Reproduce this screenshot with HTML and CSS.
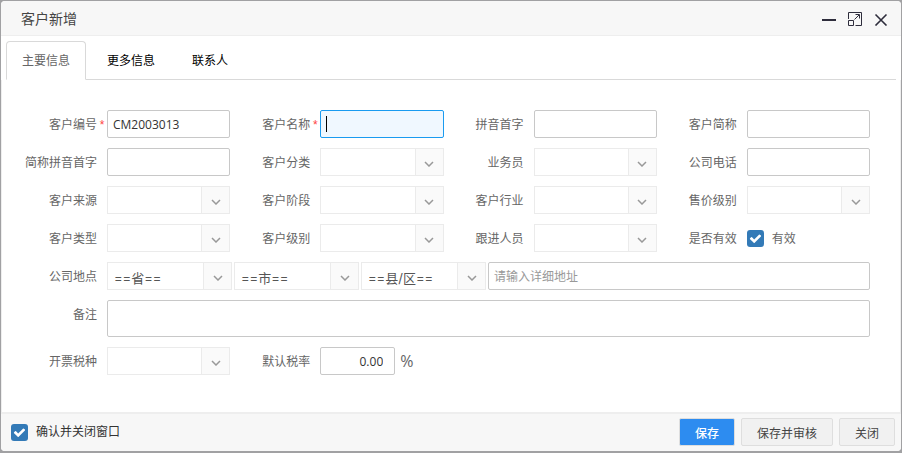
FILE: index.html
```html
<!DOCTYPE html>
<html lang="zh-CN">
	<head>
		<meta charset="UTF-8" />
		<meta name="viewport" content="width=device-width, initial-scale=1.0" />
		<title>客户新增</title>
		<link rel="stylesheet" href="styles.css">
	</head>
	<body>
		<svg class="sprite" aria-hidden="true">
			<symbol id="arrow" viewBox="0 0 10 6">
				<path d="M1 1l4 4 4-4" fill="none" stroke="#999" stroke-width="1.5" />
			</symbol>
			<symbol id="check" viewBox="0 0 1792 1792">
				<path fill="#fff" d="M1671 566q0 40-28 68l-724 724-136 136q-28 28-68 28t-68-28l-136-136-362-362q-28-28-28-68t28-68l136-136q28-28 68-28t68 28l294 295 656-657q28-28 68-28t68 28l136 136q28 28 28 68z" />
			</symbol>
		</svg>

		<div class="dialog">
			<header class="dialog-header">
				<h1 class="dialog-title">客户新增</h1>
				<div class="dialog-tools">
					<button type="button" class="tool" aria-label="最小化">
						<svg width="14" height="14" viewBox="0 0 14 14"><path d="M0 8h14" stroke="#2e2d3c" stroke-width="2" /></svg>
					</button>
					<button type="button" class="tool" aria-label="最大化">
						<svg width="14" height="14" viewBox="0 0 14 14" fill="none" stroke="#2e2d3c">
							<path d="M.5 7V.5h13v13H7.500M.5 8.500h5v5h-5zM6.500 7.500L11 3M7.500 2.500h4v4" />
						</svg>
					</button>
					<button type="button" class="tool" aria-label="关闭窗口">
						<svg width="14" height="14" viewBox="0 0 14 14"><path d="M1.500 2.500l11 11M12.500 2.500l-11 11" stroke="#2e2d3c" stroke-width="1.600" /></svg>
					</button>
				</div>
			</header>

			<nav class="tabs">
				<button type="button" class="tab active">主要信息</button>
				<button type="button" class="tab">更多信息</button>
				<button type="button" class="tab">联系人</button>
			</nav>

			<form class="form" id="customer-form">
				<div class="field">
					<label class="label" for="code">客户编号<span class="star">*</span></label>
					<input class="input" type="text" id="code" value="CM2003013" />
				</div>
				<div class="field">
					<label class="label" for="name">客户名称<span class="star">*</span></label>
					<input class="input current" type="text" id="name" />
				</div>
				<div class="field">
					<label class="label" for="pinyin">拼音首字</label>
					<input class="input" type="text" id="pinyin" />
				</div>
				<div class="field">
					<label class="label" for="short">客户简称</label>
					<input class="input" type="text" id="short" />
				</div>

				<div class="field">
					<label class="label" for="short-pinyin">简称拼音首字</label>
					<input class="input" type="text" id="short-pinyin" />
				</div>
				<div class="field">
					<label class="label" for="category">客户分类</label>
					<div class="select"><select id="category"></select><span class="arrow"><svg><use href="#arrow" /></svg></span></div>
				</div>
				<div class="field">
					<label class="label" for="salesman">业务员</label>
					<div class="select"><select id="salesman"></select><span class="arrow"><svg><use href="#arrow" /></svg></span></div>
				</div>
				<div class="field">
					<label class="label" for="phone">公司电话</label>
					<input class="input" type="text" id="phone" />
				</div>

				<div class="field">
					<label class="label" for="source">客户来源</label>
					<div class="select"><select id="source"></select><span class="arrow"><svg><use href="#arrow" /></svg></span></div>
				</div>
				<div class="field">
					<label class="label" for="stage">客户阶段</label>
					<div class="select"><select id="stage"></select><span class="arrow"><svg><use href="#arrow" /></svg></span></div>
				</div>
				<div class="field">
					<label class="label" for="industry">客户行业</label>
					<div class="select"><select id="industry"></select><span class="arrow"><svg><use href="#arrow" /></svg></span></div>
				</div>
				<div class="field">
					<label class="label" for="price-level">售价级别</label>
					<div class="select"><select id="price-level"></select><span class="arrow"><svg><use href="#arrow" /></svg></span></div>
				</div>

				<div class="field">
					<label class="label" for="type">客户类型</label>
					<div class="select"><select id="type"></select><span class="arrow"><svg><use href="#arrow" /></svg></span></div>
				</div>
				<div class="field">
					<label class="label" for="level">客户级别</label>
					<div class="select"><select id="level"></select><span class="arrow"><svg><use href="#arrow" /></svg></span></div>
				</div>
				<div class="field">
					<label class="label" for="follower">跟进人员</label>
					<div class="select"><select id="follower"></select><span class="arrow"><svg><use href="#arrow" /></svg></span></div>
				</div>
				<div class="field">
					<span class="label">是否有效</span>
					<label class="check">
						<span class="check-box"><input type="checkbox" checked /><svg><use href="#check" /></svg></span>
						<span class="check-text">有效</span>
					</label>
				</div>

				<div class="field wide">
					<label class="label" for="province">公司地点</label>
					<div class="address">
						<div class="select"><select id="province"><option>==省==</option></select><span class="arrow"><svg><use href="#arrow" /></svg></span></div>
						<div class="select"><select aria-label="市"><option>==市==</option></select><span class="arrow"><svg><use href="#arrow" /></svg></span></div>
						<div class="select"><select aria-label="县/区"><option>==县/区==</option></select><span class="arrow"><svg><use href="#arrow" /></svg></span></div>
						<input class="input" type="text" aria-label="详细地址" placeholder="请输入详细地址" />
					</div>
				</div>

				<div class="field wide">
					<label class="label" for="remark">备注</label>
					<textarea class="input remark" id="remark"></textarea>
				</div>

				<div class="field">
					<label class="label" for="tax-type">开票税种</label>
					<div class="select"><select id="tax-type"></select><span class="arrow"><svg><use href="#arrow" /></svg></span></div>
				</div>
				<div class="field">
					<label class="label" for="tax-rate">默认税率</label>
					<div class="rate">
						<input class="input number" type="text" id="tax-rate" value="0.00" />
						<span class="unit">%</span>
					</div>
				</div>
			</form>

			<footer class="dialog-footer">
				<label class="check">
					<span class="check-box"><input type="checkbox" checked /><svg><use href="#check" /></svg></span>
					<span>确认并关闭窗口</span>
				</label>
				<div class="actions">
					<button type="submit" form="customer-form" class="btn primary">保存</button>
					<button type="button" class="btn">保存并审核</button>
					<button type="button" class="btn">关闭</button>
				</div>
			</footer>
		</div>
	</body>
</html>
```
FILE: styles.css
```css
* {
	box-sizing: border-box;
}

body {
	display: flex;
	min-height: 100vh;
	margin: 0;
	padding: 1px 1px 2px;
	background: #a1a1a3;
	color: #666;
	font-family: 'Open Sans', 'Noto Sans CJK SC', sans-serif;
	font-size: 12px;
	line-height: 18px;
}

button,
input,
select,
textarea {
	margin: 0;
	font: inherit;
}

button {
	cursor: pointer;
}

.sprite {
	display: none;
}

/* dialog */
.dialog {
	display: flex;
	flex: 1;
	flex-direction: column;
	min-width: 0;
	border-radius: 4px;
	background: #fff;
	overflow: hidden;
}

.dialog-header {
	display: flex;
	align-items: center;
	justify-content: space-between;
	height: 35px;
	padding: 0 7px 0 20px;
	border-bottom: 1px solid #eee;
	background: #f7f7f7;
}

.dialog-title {
	margin: 0;
	padding-top: 2px;
	color: #444;
	font-size: 14px;
	font-weight: 400;
}

.dialog-tools {
	display: flex;
	padding-top: 1px;
}

.tool {
	display: flex;
	justify-content: center;
	width: 26px;
	padding: 0;
	border: none;
	background: none;
}

/* tabs */
.tabs {
	display: flex;
	gap: 5px;
	margin: 5px 5px 0;
	border-bottom: 1px solid #d9d9d9;
}

.tab {
	height: 39px;
	margin-bottom: -1px;
	padding: 0 15px;
	border: 1px solid transparent;
	border-radius: 4px 4px 0 0;
	background: none;
	color: #000;
}
.tab.active {
	border-color: #d9d9d9;
	border-bottom-color: #fff;
	background: #fff;
	color: #666;
}

/* form */
.form {
	display: grid;
	flex: 1;
	grid-template-columns: repeat(4, 1fr);
	align-content: start;
	gap: 10px 0;
	padding: 30px 30px 20px 15px;
	border: solid #eee;
	border-width: 0 1px;
}

.field {
	display: grid;
	grid-template-columns: 90px 1fr;
	align-items: start;
}
.field.wide {
	grid-column: 1 / -1;
}

.label {
	padding: 2px 10px 0 0;
	line-height: 26px;
	text-align: right;
	white-space: nowrap;
}

.star {
	display: inline-block;
	width: 10px;
	margin-right: -10px;
	color: #f44;
	font-family: 'Liberation Sans', sans-serif;
	text-align: center;
}

.input {
	display: block;
	width: 100%;
	min-width: 0;
	height: 28px;
	padding: 0 5px;
	border: 1px solid #c8c8c8;
	border-radius: 2px;
	outline: none;
	background: #fff;
	color: #333;
}
.input::placeholder {
	color: #999;
}
.input.current {
	border-color: #1a9bf0;
	background: linear-gradient(#000, #000) 5px center / 1px 16px no-repeat #f0f8ff;
}

.remark {
	height: 37px;
	resize: none;
}

.select {
	display: grid;
	grid-template-columns: 1fr 29px;
	height: 28px;
}
.select select {
	grid-area: 1 / 1 / 2 / 3;
	width: 100%;
	padding: 3px 34px 0 6px;
	border: 1px solid #ebebeb;
	border-radius: 0;
	outline: none;
	background: #fff;
	color: #555;
	font-family: Inter, 'Noto Sans CJK SC', sans-serif;
	font-size: 13px;
	appearance: none;
}

.arrow {
	display: flex;
	grid-area: 1 / 2;
	align-items: center;
	justify-content: center;
	padding-top: 4px;
	border: 1px solid #ebebeb;
	background: #fafafa;
	pointer-events: none;
}
.arrow svg {
	width: 10px;
	height: 6px;
}

.address {
	display: grid;
	grid-template-columns: repeat(3, 125px) 1fr;
	gap: 2px;
}

.rate {
	display: flex;
	align-items: center;
	gap: 5px;
}

.number {
	width: 75px;
	padding-right: 11px;
	text-align: right;
}

.unit {
	font-size: 16px;
}

/* checkbox */
.check {
	display: flex;
	align-items: center;
	gap: 8px;
	min-height: 28px;
}

.check-text {
	padding-top: 2px;
}

.check-box {
	display: grid;
	place-items: center;
}
.check-box input {
	grid-area: 1 / 1;
	width: 17px;
	height: 17px;
	border-radius: 3px;
	background: #337ab7;
	appearance: none;
}
.check-box svg {
	grid-area: 1 / 1;
	width: 13px;
	height: 13px;
	pointer-events: none;
}

/* footer */
.dialog-footer {
	display: flex;
	align-items: center;
	justify-content: space-between;
	padding: 4px 6px 5px 10px;
	border-top: 2px solid #eee;
	background: #f7f7f7;
	color: #333;
}

.actions {
	display: flex;
	gap: 6px;
}

.btn {
	height: 28px;
	padding: 3px 15px 0;
	border: 1px solid #dedede;
	border-radius: 2px;
	background: #f1f1f1;
	color: #444;
}
.btn.primary {
	background: #2d8cf0;
	color: #fff;
	font-weight: 500;
}
```
